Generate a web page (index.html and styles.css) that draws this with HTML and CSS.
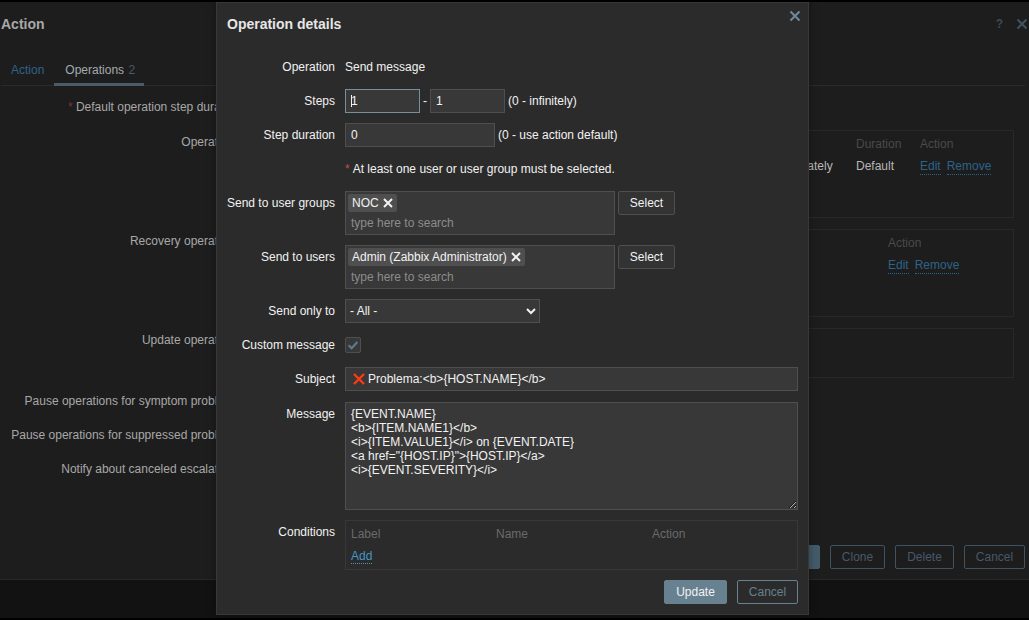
FILE: index.html
```html
<!DOCTYPE html>
<html lang="en">
<head>
<meta charset="utf-8">
<title>Operation details</title>
<link rel="stylesheet" href="styles.css">
</head>
<body>
<div class="page">
  <section class="dialog">
    <header class="dialog-head">
      <h2 class="dialog-title">Action</h2>
      <div class="head-tools">
        <span class="head-help">?</span>
        <svg class="icon-close-dim" viewBox="0 0 12 12" width="12" height="12"><path d="M1.5 1.5l9 9M10.5 1.5l-9 9"/></svg>
      </div>
    </header>
    <nav class="tabs">
      <a class="tab tab-link">Action</a>
      <a class="tab tab-active">Operations <span class="tab-count">2</span></a>
    </nav>
    <div class="bg-form">
      <div class="bg-label"><span class="bg-star">*</span> Default operation step duration</div>
      <div></div>
      <div class="bg-label">Operations</div>
      <div class="bg-table bg-table-a">
        <span></span><span></span><span class="bg-th">Duration</span><span class="bg-th">Action</span>
        <span></span><span class="bg-td">Immediately</span><span class="bg-td">Default</span>
        <span class="bg-links"><a>Edit</a><a>Remove</a></span>
      </div>
      <div class="bg-label">Recovery operations</div>
      <div class="bg-table bg-table-b">
        <span></span><span class="bg-th">Action</span>
        <span></span><span class="bg-links"><a>Edit</a><a>Remove</a></span>
      </div>
      <div class="bg-label">Update operations</div>
      <div class="bg-table bg-table-c"></div>
      <div class="bg-label bg-label-short">Pause operations for symptom problems</div>
      <div></div>
      <div class="bg-label bg-label-short">Pause operations for suppressed problems</div>
      <div></div>
      <div class="bg-label bg-label-short">Notify about canceled escalations</div>
      <div></div>
    </div>
    <footer class="bg-foot">
      <button class="btn-bg btn-bg-main">Update</button>
      <button class="btn-bg btn-clone">Clone</button>
      <button class="btn-bg btn-delete">Delete</button>
      <button class="btn-bg btn-cancel">Cancel</button>
    </footer>
  </section>
</div>

<section class="modal">
  <header class="modal-head">
    <h2 class="modal-title">Operation details</h2>
    <svg class="icon-close" viewBox="0 0 12 12" width="12" height="12"><path d="M1.5 1.5l9 9M10.5 1.5l-9 9"/></svg>
  </header>
  <form class="form">
    <div class="label">Operation</div>
    <div class="field">Send message</div>

    <div class="label">Steps</div>
    <div class="field">
      <span class="caret-wrap"><input class="input input-focus" type="text" value="1"></span>
      <span class="dash">-</span>
      <input class="input input-step" type="text" value="1">
      <span class="hint-steps">(0 - infinitely)</span>
    </div>

    <div class="label">Step duration</div>
    <div class="field">
      <input class="input input-duration" type="text" value="0">
      <span class="hint-duration">(0 - use action default)</span>
    </div>

    <div class="field field-note"><span class="star">*</span> At least one user or user group must be selected.</div>

    <div class="label">Send to user groups</div>
    <div class="field field-top">
      <div class="multi">
        <span class="tag">NOC <svg class="tag-x" viewBox="0 0 10 10" width="10" height="10"><path d="M1 1l8 8M9 1l-8 8"/></svg></span>
        <span class="placeholder">type here to search</span>
      </div>
      <button type="button" class="btn btn-select">Select</button>
    </div>

    <div class="label">Send to users</div>
    <div class="field field-top">
      <div class="multi">
        <span class="tag">Admin (Zabbix Administrator) <svg class="tag-x" viewBox="0 0 10 10" width="10" height="10"><path d="M1 1l8 8M9 1l-8 8"/></svg></span>
        <span class="placeholder">type here to search</span>
      </div>
      <button type="button" class="btn btn-select">Select</button>
    </div>

    <div class="label">Send only to</div>
    <div class="field">
      <select class="select"><option>- All -</option></select>
    </div>

    <div class="label">Custom message</div>
    <div class="field">
      <span class="check"><svg viewBox="0 0 16 16" width="14" height="14"><path d="M3 8.2l3.4 3.4 6.6-7"/></svg></span>
    </div>

    <div class="label">Subject</div>
    <div class="field">
      <div class="subject">
        <svg class="icon-red" viewBox="0 0 12 12" width="12" height="12"><path class="red-edge" d="M1 1l10 10M11 1l-10 10"/><path class="red-core" d="M1 1l10 10M11 1l-10 10"/></svg>
        <span>Problema:&lt;b&gt;{HOST.NAME}&lt;/b&gt;</span>
      </div>
    </div>

    <div class="label label-message">Message</div>
    <div class="field field-message">
      <textarea class="textarea" spellcheck="false">{EVENT.NAME}
&lt;b&gt;{ITEM.NAME1}&lt;/b&gt;
&lt;i&gt;{ITEM.VALUE1}&lt;/i&gt; on {EVENT.DATE}
&lt;a href="{HOST.IP}"&gt;{HOST.IP}&lt;/a&gt;
&lt;i&gt;{EVENT.SEVERITY}&lt;/i&gt;</textarea>
    </div>

    <div class="label">Conditions</div>
    <div class="field">
      <div class="conditions">
        <span class="cond-th">Label</span><span class="cond-th">Name</span><span class="cond-th">Action</span>
        <a class="link">Add</a>
      </div>
    </div>
  </form>
  <footer class="modal-foot">
    <button type="button" class="btn btn-primary">Update</button>
    <button type="button" class="btn btn-alt">Cancel</button>
  </footer>
</section>
</body>
</html>
```

FILE: styles.css
```css
* { box-sizing: border-box; }
html { background: #000; }
body {
  margin: 0;
  height: 620px;
  overflow: hidden;
  position: relative;
  font: 12px/14px "Liberation Sans", Arial, sans-serif;
  color: #f2f2f2;
}
button, input, select, textarea { font: inherit; margin: 0; }

/* dimmed page behind the modal */
.page { margin-top: 2px; height: 616px; background: #121212; }
.dialog {
  height: 578px;
  background: #1d1d1d;
  border-bottom: 1px solid #282828;
  display: flex;
  flex-direction: column;
  color: #a8a8a8;
}
.dialog-head {
  height: 44px;
  padding: 0 0 0 1px;
  display: flex;
  align-items: center;
  justify-content: space-between;
}
.dialog-title { margin: 0; font-size: 14px; font-weight: bold; color: #a8a8a8; }
.head-tools { display: flex; align-items: center; gap: 13px; padding-right: 1px; }
.head-help { color: #3d4a54; font-size: 12px; font-weight: bold; }
.icon-close-dim path { stroke: #3f5361; stroke-width: 2; fill: none; }

.tabs {
  height: 40px;
  margin: 0 4px 0 1px;
  border-bottom: 1px solid #2a2a2a;
  display: flex;
}
.tab { padding: 17px 10px 0; height: 40px; white-space: nowrap; }
.tab-link { color: #2c6389; }
.tab-active {
  width: 90px;
  padding-left: 11px;
  padding-right: 0;
  color: #a4aaae;
  border-bottom: 3px solid #4a5a66;
}
.tab-count { color: #4b5a64; margin-left: 1px; }

.bg-form {
  display: grid;
  grid-template-columns: 240px 764px;
  grid-auto-rows: min-content;
  column-gap: 10px;
  row-gap: 11px;
  padding-top: 9px;
}
.bg-label { text-align: right; line-height: 24px; white-space: nowrap; }
.bg-star { color: #7d3232; }
.bg-table { border: 1px solid #282828; display: grid; padding: 5px; }
.bg-table-a {
  height: 88px;
  grid-template-columns: 512px 88px 64px 1fr;
  grid-auto-rows: 22px;
}
.bg-table-b {
  height: 88px;
  grid-template-columns: 632px 1fr;
  grid-auto-rows: 22px;
}
.bg-table-c { height: 50px; }
.bg-th { color: #4a4a4a; line-height: 16px; }
.bg-td { line-height: 16px; color: #b8b8b8; }
.bg-links { display: flex; gap: 6px; line-height: 16px; align-items: flex-start; }
.bg-links a { color: #2c6389; border-bottom: 1px dotted #2c6389; }
.bg-label-short { line-height: 24px; height: 23px; }

.bg-foot {
  margin-top: auto;
  padding: 0 4px 10px 0;
  display: flex;
  justify-content: flex-end;
  gap: 10px;
}
.btn-bg {
  height: 24px;
  padding: 0;
  background: transparent;
  border: 1px solid #3f5361;
  border-radius: 2px;
  color: #46596a;
}
.btn-bg-main { width: 64px; background: #445b6a; border-color: #445b6a; color: #a3a3a3; }
.btn-clone { width: 55px; }
.btn-delete { width: 59px; }
.btn-cancel { width: 61px; }

/* modal */
.modal {
  position: absolute;
  left: 216px;
  top: 2px;
  width: 593px;
  background: #2b2b2b;
  border: 1px solid #383838;
  box-shadow: 0 0 8px rgba(0, 0, 0, 0.35);
}
.modal-head {
  height: 52px;
  padding: 0 7px 0 10px;
  display: flex;
  justify-content: space-between;
}
.modal-title {
  margin: 12px 0 0;
  font-size: 14px;
  line-height: 18px;
  font-weight: bold;
  color: #e6e6e6;
}
.icon-close { margin-top: 7px; }
.icon-close path { stroke: #6c8a9c; stroke-width: 2; fill: none; }

.form {
  padding: 0 10px;
  display: grid;
  grid-template-columns: 108px 453px;
  column-gap: 10px;
  row-gap: 10px;
}
.label { text-align: right; line-height: 24px; color: #f2f2f2; white-space: nowrap; }
.field {
  min-height: 24px;
  display: flex;
  align-items: center;
  color: #f2f2f2;
  white-space: nowrap;
}
.field-top { align-items: flex-start; gap: 3px; }
.field-note { grid-column: 2; }
.star { color: #c05050; margin-right: 3px; }
.label-message, .field-message { margin-top: 1px; }

.input {
  height: 24px;
  padding: 0 5px;
  background: #383838;
  border: 1px solid #4f4f4f;
  color: #f2f2f2;
  outline: none;
}
.input-focus { width: 75px; border-color: #768f9e; display: block; }
.input-step { width: 75px; }
.input-duration { width: 150px; }
.caret-wrap { position: relative; display: block; }
.caret-wrap::after {
  content: "";
  position: absolute;
  left: 6px;
  top: 6px;
  width: 1px;
  height: 12px;
  background: #f2f2f2;
}
.dash { width: 10px; text-align: center; }
.hint-steps { margin-left: 3px; }
.hint-duration { margin-left: 3px; }

.multi {
  width: 270px;
  height: 44px;
  padding: 2px;
  background: #383838;
  border: 1px solid #4f4f4f;
  display: flex;
  flex-direction: column;
  align-items: flex-start;
}
.tag {
  height: 18px;
  padding: 0 4px;
  background: #4f4f4f;
  border-radius: 2px;
  display: flex;
  align-items: center;
  gap: 4px;
  color: #f2f2f2;
}
.tag-x path { stroke: #f2f2f2; stroke-width: 2; fill: none; }
.placeholder { margin: 4px 0 0 3px; color: #8c8c8c; }

.btn {
  height: 24px;
  padding: 0;
  border-radius: 2px;
  background: transparent;
  color: #f2f2f2;
}
.btn-select { width: 57px; height: 24px; border: 1px solid #4f4f4f; background: #333; }
.btn-primary { width: 63px; background: #678190; border: 1px solid #678190; }
.btn-alt { width: 61px; border: 1px solid #678190; color: #678190; }

.select {
  width: 195px;
  height: 24px;
  background: #383838;
  border: 1px solid #4f4f4f;
  border-radius: 0;
  color: #f2f2f2;
  outline: none;
}

.check {
  width: 16px;
  height: 16px;
  background: #383838;
  border: 1px solid #4f4f4f;
  border-radius: 2px;
  display: flex;
  align-items: center;
  justify-content: center;
}
.check path { stroke: #5e7c90; stroke-width: 2.4; fill: none; }

.subject {
  width: 453px;
  height: 24px;
  padding: 0 7px;
  background: #383838;
  border: 1px solid #4f4f4f;
  display: flex;
  align-items: center;
  gap: 3px;
  color: #f2f2f2;
}
.red-edge { stroke: #8a2a18; stroke-width: 3; fill: none; }
.red-core { stroke: #f23f1e; stroke-width: 2; fill: none; }

.textarea {
  display: block;
  width: 453px;
  height: 108px;
  padding: 4px 5px 3px;
  background: #383838;
  border: 1px solid #4f4f4f;
  border-radius: 0;
  color: #f2f2f2;
  font: 12px/14px "Liberation Sans", Arial, sans-serif;
  outline: none;
  overflow: hidden;
}

.conditions {
  width: 453px;
  height: 50px;
  padding: 6px 5px 0;
  border: 1px solid #383838;
  display: grid;
  grid-template-columns: 145px 156px 1fr;
  grid-auto-rows: min-content;
  row-gap: 8px;
}
.cond-th { color: #6a6a6a; }
.link {
  grid-column: 1;
  justify-self: start;
  color: #4796c4;
  border-bottom: 1px dotted #4796c4;
}

.modal-foot {
  padding: 10px;
  display: flex;
  justify-content: flex-end;
  gap: 10px;
}
```
